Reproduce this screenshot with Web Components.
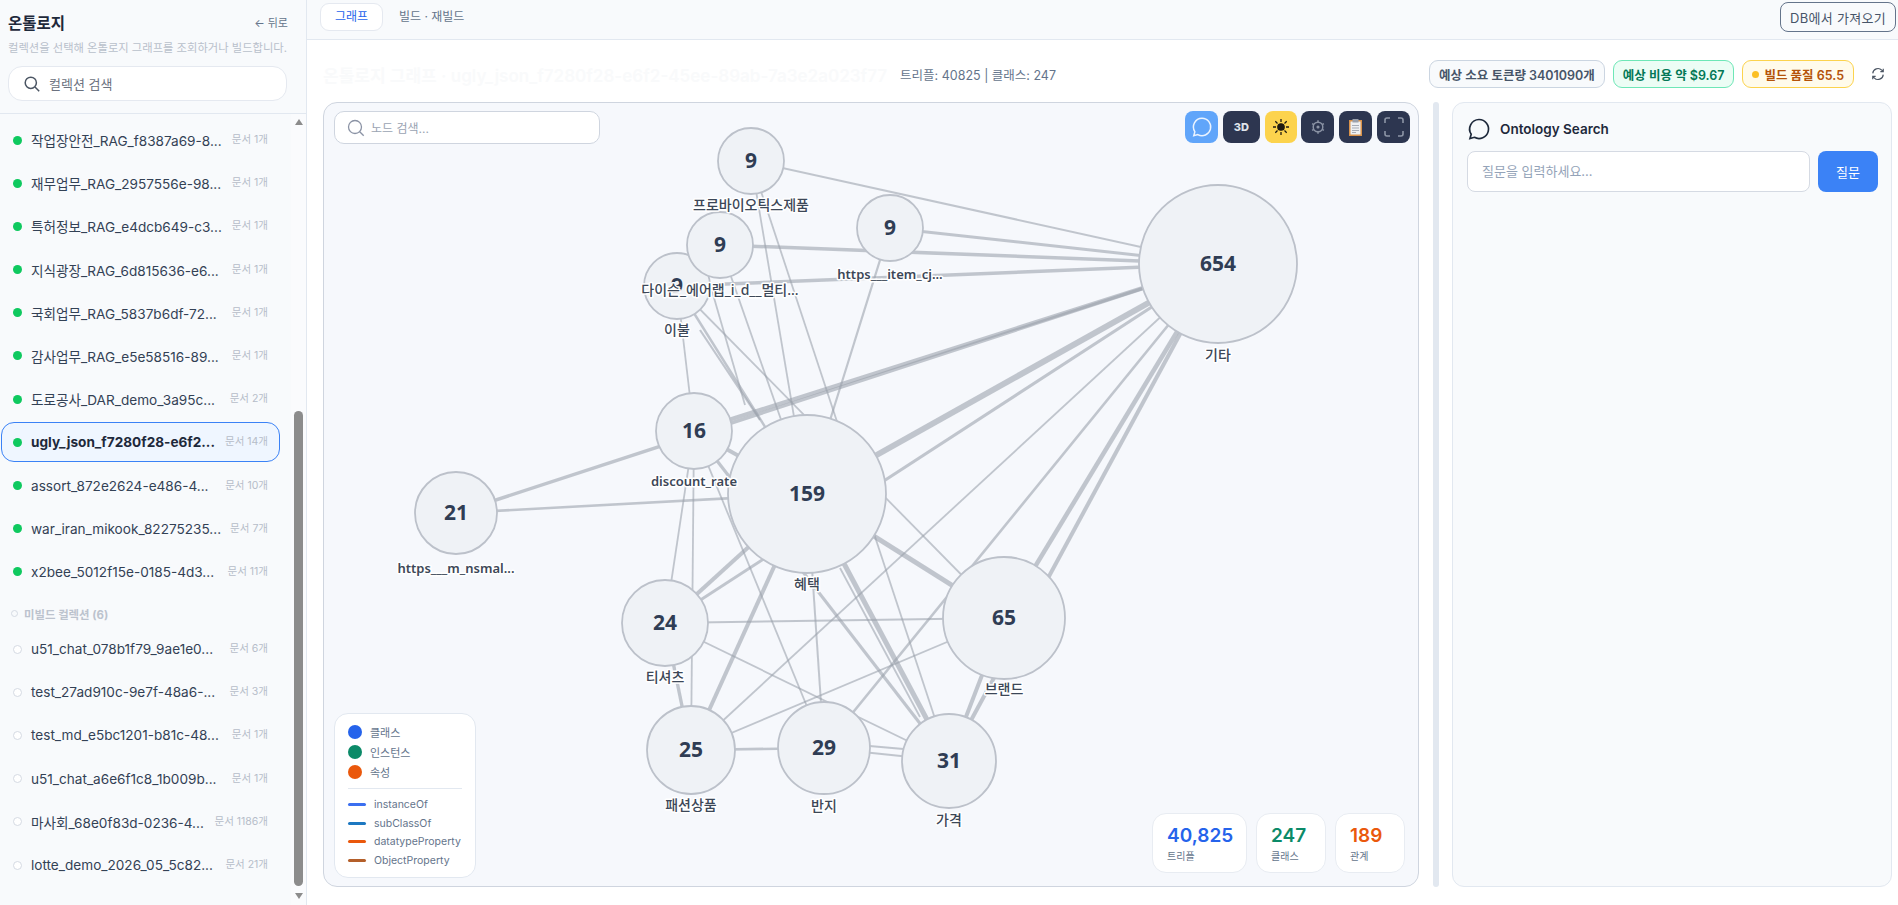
<!DOCTYPE html>
<html lang="ko">
<head>
<meta charset="utf-8">
<title>온톨로지</title>
<style>
    html, body { margin: 0; height: 905px; overflow: hidden; background: #fff; }
    body { font-family: Inter, "Noto Sans CJK KR", sans-serif; color: #334155; }
</style>
</head>
<body>
<onto-app></onto-app>
<script>
const FONT = 'Inter, "Noto Sans CJK KR", sans-serif';

class Base extends HTMLElement {
    constructor() {
        super();
        this.attachShadow({ mode: 'open' });
    }
    render(css, html) {
        this.shadowRoot.innerHTML = `<style>*{box-sizing:border-box}${css}</style>${html}`;
    }
}

class CollectionRow extends Base {
    connectedCallback() {
        const built = this.getAttribute('state') !== 'none';
        const sel = this.hasAttribute('selected');
        this.render(`
            :host { display: flex; align-items: center; height: 40px; margin-bottom: 3.2px; padding: 0 11px; border: 1px solid transparent; border-radius: 13px; }
            :host([selected]) { background: #eff6ff; border-color: #3b82f6; }
            .dot { width: 9px; height: 9px; border-radius: 50%; flex: none; background: #0fc95f; margin-right: 9px; }
            .dot.none { background: #fff; border: 1px solid #d5dae3; }
            .name { flex: 1; min-width: 0; font-size: 13.6px; white-space: nowrap; color: #334155; }
            .name.sel { font-weight: 700; color: #1e293b; }
            .docs { font-size: 10.5px; color: #b6bdc9; white-space: nowrap; margin-top: -3px; }
        `, `<span class="dot ${built ? '' : 'none'}"></span>
            <span class="name ${sel ? 'sel' : ''}">${this.getAttribute('name')}</span>
            <span class="docs">문서 ${this.getAttribute('docs')}개</span>`);
    }
}
customElements.define('collection-row', CollectionRow);

class FakeScrollbar extends Base {
    connectedCallback() {
        this.render(`
            :host { display: flex; flex-direction: column; align-items: center; width: 15px; flex: none; padding-top: 5px; background: #fafbfd; }
            .up, .down { width: 0; height: 0; border-left: 4.5px solid transparent; border-right: 4.5px solid transparent; }
            .up { border-bottom: 6px solid #8c8c8c; }
            .down { border-top: 6px solid #8c8c8c; margin-top: 7px; }
            .thumb { width: 9px; height: 475px; margin-top: 286px; background: #8c8c8c; border-radius: 5px; }
        `, `<div class="up"></div><div class="thumb"></div><div class="down"></div>`);
    }
}
customElements.define('fake-scrollbar', FakeScrollbar);

class OntoSidebar extends Base {
    connectedCallback() {
        const built = [
            ['작업장안전_RAG_f8387a69-8...', 1], ['재무업무_RAG_2957556e-98...', 1], ['특허정보_RAG_e4dcb649-c3...', 1],
            ['지식광장_RAG_6d815636-e6...', 1], ['국회업무_RAG_5837b6df-72...', 1], ['감사업무_RAG_e5e58516-89...', 1],
            ['도로공사_DAR_demo_3a95c...', 2], ['ugly_json_f7280f28-e6f2...', 14], ['assort_872e2624-e486-4...', 10],
            ['war_iran_mikook_82275235...', 7], ['x2bee_5012f15e-0185-4d3...', 11]
        ];
        const pending = [
            ['u51_chat_078b1f79_9ae1e0...', 6], ['test_27ad910c-9e7f-48a6-...', 3], ['test_md_e5bc1201-b81c-48...', 1],
            ['u51_chat_a6e6f1c8_1b009b...', 1], ['마사회_68e0f83d-0236-4...', 1186], ['lotte_demo_2026_05_5c82...', 21]
        ];
        const row = ([n, d], st, i) =>
            `<collection-row name="${n}" docs="${d}" state="${st}" ${st === 'ok' && i === 7 ? 'selected' : ''}></collection-row>`;
        this.render(`
            :host { display: flex; flex-direction: column; width: 307px; flex: none; height: 905px; background: #f8fafc; border-right: 1px solid #e2e8f0; }
            header { padding: 11px 18px 12px 8px; border-bottom: 1px solid #e2e8f0; height: 114px; }
            .top { display: flex; justify-content: space-between; align-items: center; height: 22px; }
            h1 { margin: 0; font-size: 15.5px; font-weight: 700; color: #1e293b; }
            .back { font-size: 11px; color: #64748b; }
            p { margin: 6px 0 9px; font-size: 11.3px; line-height: 18px; color: #b9c0cb; white-space: nowrap; }
            .search { display: flex; align-items: center; gap: 9px; height: 35px; margin-right: 1px; padding-left: 15px; background: #fff; border: 1px solid #e5e9f0; border-radius: 14px; font-size: 13px; color: #6b7280; }
            .body { flex: 1; display: flex; min-height: 0; }
            .list { flex: 1; min-width: 0; padding: 6px 11px 0 1px; overflow: hidden; }
            .head { display: flex; align-items: center; gap: 6px; height: 34px; padding: 3px 0 0 10px; font-size: 11.4px; font-weight: 700; color: #bcc3ce; }
            .head i { width: 7px; height: 7px; border: 1px solid #d5dae3; border-radius: 50%; }
        `, `<header>
                <div class="top"><h1>온톨로지</h1><span class="back">← 뒤로</span></div>
                <p>컬렉션을 선택해 온톨로지 그래프를 조회하거나 빌드합니다.</p>
                <div class="search">
                    <svg width="16" height="16" viewBox="0 0 16 16" fill="none" stroke="#4b5563" stroke-width="1.5"><circle cx="6.8" cy="6.8" r="5.6"/><path d="M11 11l4.2 4.2"/></svg>
                    <span>컬렉션 검색</span>
                </div>
            </header>
            <div class="body">
                <div class="list">
                    ${built.map((b, i) => row(b, 'ok', i)).join('')}
                    <div class="head"><i></i><span>미빌드 컬렉션 (6)</span></div>
                    ${pending.map((b, i) => row(b, 'none', i)).join('')}
                </div>
                <fake-scrollbar></fake-scrollbar>
            </div>`);
    }
}
customElements.define('onto-sidebar', OntoSidebar);

class TabBar extends Base {
    connectedCallback() {
        this.render(`
            :host { display: flex; align-items: flex-start; height: 40px; flex: none; padding: 3px 2px 0 13px; background: #f8fafc; border-bottom: 1px solid #e2e8f0; font-size: 12px; }
            .tab { height: 28px; line-height: 26px; padding: 0 15px; border: 1px solid transparent; border-radius: 9px; color: #64748b; }
            .tab.on { width: 63px; text-align: center; padding: 0; background: #fff; border-color: #e5e9f0; color: #2563eb; }
            button { margin: -1px 0 0 auto; width: 116px; height: 30px; padding: 0; background: #f8fafc; border: 1px solid #64748b; border-radius: 8px; font: 13px ${FONT}; letter-spacing: .3px; color: #475569; }
        `, `<div class="tab on">그래프</div><div class="tab">빌드 · 재빌드</div><button>DB에서 가져오기</button>`);
    }
}
customElements.define('tab-bar', TabBar);

class StatusBadge extends Base {
    connectedCallback() {
        this.render(`
            :host { display: flex; align-items: center; gap: 5px; height: 28px; padding: 0 9px; border: 1px solid; border-radius: 9px; font-size: 12.5px; font-weight: 600; white-space: nowrap; }
            :host([tone="gray"]) { background: #f8fafc; border-color: #cbd5e1; color: #475569; }
            :host([tone="green"]) { background: #ecfdf5; border-color: #6ee7b7; color: #047857; }
            :host([tone="amber"]) { background: #fffbeb; border-color: #fcd34d; color: #b45309; }
            i { width: 7px; height: 7px; border-radius: 50%; background: #fbbf24; }
        `, `${this.getAttribute('tone') === 'amber' ? '<i></i>' : ''}<slot></slot>`);
    }
}
customElements.define('status-badge', StatusBadge);

class GraphHeader extends Base {
    connectedCallback() {
        this.render(`
            :host { display: flex; align-items: center; height: 62px; flex: none; padding: 6px 0 0; }
            h2 { margin: 0; font-size: 17px; font-weight: 600; color: #f9fafb; white-space: nowrap; }
            .meta { margin-left: 13px; font-size: 12.5px; color: #64748b; white-space: nowrap; }
            .right { margin-left: auto; display: flex; align-items: center; gap: 8px; }
            svg { margin: 0 7px 0 9px; }
        `, `<h2>온톨로지 그래프 · ugly_json_f7280f28-e6f2-45ee-89ab-7a3e2a023f77</h2>
            <span class="meta">트리플: 40825 | 클래스: 247</span>
            <div class="right">
                <status-badge tone="gray">예상 소요 토큰량 3401090개</status-badge>
                <status-badge tone="green">예상 비용 약 $9.67</status-badge>
                <status-badge tone="amber">빌드 품질 65.5</status-badge>
                <svg width="14" height="14" viewBox="0 0 24 24" fill="none" stroke="#4b5563" stroke-width="2"><path d="M3 11a9 9 0 0 1 15.5-5.5L21 8M21 3v5h-5M21 13a9 9 0 0 1-15.5 5.5L3 16M3 21v-5h5"/></svg>
            </div>`);
    }
}
customElements.define('graph-header', GraphHeader);

const NODES = {
    b: [677, 286, 33, '9', '이불', 331],
    p: [751, 161, 33, '9', '프로바이오틱스제품', 206],
    d: [720, 245, 33, '9', '다이슨_에어랩_i_d__멀티...', 291],
    h: [890, 228, 33, '9', 'https___item_cj...', 275],
    k: [1218, 264, 79, '654', '기타', 356],
    s: [694, 431, 38, '16', 'discount_rate', 482],
    m: [456, 513, 41, '21', 'https___m_nsmal...', 569],
    t: [807, 494, 79, '159', '혜택', 585],
    y: [665, 623, 43, '24', '티셔츠', 678],
    g: [1004, 618, 61, '65', '브랜드', 690],
    f: [691, 750, 44, '25', '패션상품', 806],
    r: [824, 748, 46, '29', '반지', 807],
    c: [949, 761, 47, '31', '가격', 821]
};
const EDGES = [
    ['k', 'p', 2], ['k', 'd', 3.5], ['k', 'h', 3], ['k', 'b', 3.5], ['k', 's', 4], ['k', 'm', 3.5], ['k', 't', 6],
    ['k', 'y', 3], ['k', 'f', 1.8], ['k', 'r', 2.6], ['k', 'c', 4], ['k', 'g', 4.5],
    ['t', 'g', 5], ['t', 'c', 5], ['t', 'y', 4], ['t', 'f', 4], ['t', 'r', 2], ['t', 'p', 1.8], ['t', 'd', 1.8],
    ['t', 'h', 2.2], ['t', 'b', 2.5], ['t', 's', 4], ['t', 'm', 2.6],
    ['c', 'p', 1.8], ['c', 's', 3.2], ['c', 'y', 1.8], ['c', 'g', 4], ['r', 'c', 1.8],
    ['b', 's', 1.8], ['b', 'g', 1.8], ['s', 'y', 1.8], ['s', 'f', 1.8], ['s', 'r', 1.8],
    ['y', 'f', 3.4], ['y', 'g', 2], ['f', 'g', 1.8], ['f', 'r', 2.6]
];
// doubled strokes that run next to another edge
const EXTRA = [
    [840, 568, 920, 717, 1.8], [708, 277, 745, 405, 1.8], [700, 330, 760, 420, 2.2], [824, 742, 949, 753, 1.8]
];

class GraphCanvas extends Base {
    connectedCallback() {
        const line = (x1, y1, x2, y2, w) =>
            `<line x1="${x1}" y1="${y1}" x2="${x2}" y2="${y2}" stroke="#9aa0ab" stroke-opacity=".58" stroke-width="${w}"/>`;
        const edges = EDGES.map(([a, b, w]) => line(NODES[a][0], NODES[a][1], NODES[b][0], NODES[b][1], w)).join('')
            + EXTRA.map(e => line(...e)).join('');
        const circles = Object.values(NODES).map(([x, y, r, n]) =>
            `<circle cx="${x}" cy="${y}" r="${r}" fill="#eff2f6" stroke="#bcc1ca" stroke-width="1.8"/>
             <text class="n" x="${x}" y="${y + 7}">${n}</text>`).join('');
        const labels = Object.values(NODES).map(([x, , , , l, ly]) =>
            `<text class="l ${/[가-힣]/.test(l) ? 'ko' : ''}" x="${x}" y="${ly + 4}">${l}</text>`).join('');
        this.render(`
            :host { display: block; position: absolute; inset: 0; }
            svg { display: block; width: 100%; height: 100%; }
            text { text-anchor: middle; font-family: "Noto Sans", "Noto Sans CJK KR", sans-serif; }
            .n { font-size: 21px; font-weight: 700; fill: #2f3d54; }
            .l { font-size: 13px; font-weight: 600; fill: #3c4757; paint-order: stroke; stroke: #fff; stroke-width: 3px; stroke-linejoin: round; }
            .l.ko { font-size: 14px; font-weight: 500; }
        `, `<svg viewBox="324 103 1094 783">${edges}${circles}${labels}</svg>`);
    }
}
customElements.define('graph-canvas', GraphCanvas);

class GraphToolbar extends Base {
    connectedCallback() {
        this.render(`
            :host { display: flex; gap: 4.8px; position: absolute; top: 8px; right: 8px; }
            div { display: flex; align-items: center; justify-content: center; width: 33px; height: 32px; border-radius: 8px; background: #2d3650; color: #dfe3ea; font-size: 11px; font-weight: 800; }
            .blue { background: #60a5fa; }
            .yellow { width: 32px; background: #fcd34d; }
            .wide { width: 37px; }
        `, `<div class="blue"><svg width="22" height="22" viewBox="0 0 24 24" fill="none" stroke="#eaf3ff" stroke-width="1.6"><path d="M12 2.5a9.5 9.5 0 1 1-4.6 17.8L3 21.5l1.2-4.3A9.5 9.5 0 0 1 12 2.5z"/></svg></div>
            <div class="wide">3D</div>
            <div class="yellow"><svg width="18" height="18" viewBox="0 0 18 18" fill="none" stroke="#1f1a10" stroke-width="1.3"><circle cx="9" cy="9" r="3.2" fill="#1f1a10"/><path d="M9 1v3M9 14v3M1 9h3M14 9h3M3.3 3.3l2.200 2.200M12.500 12.500l2.200 2.200M3.300 14.700l2.200-2.200M12.500 5.500l2.200-2.200"/></svg></div>
            <div><svg width="16" height="16" viewBox="0 0 16 16" fill="none" stroke="#8b93a5" stroke-width="1.5"><circle cx="8" cy="8" r="4.800"/><circle cx="8" cy="8" r=".8" fill="#8b93a5"/><path d="M8 1.200v2M8 12.800v2M2.100 4.600l1.700 1M12.200 10.400l1.700 1M2.100 11.400l1.700-1M12.200 5.600l1.700-1"/></svg></div>
            <div><svg width="13" height="17" viewBox="0 0 13 17"><rect x="0" y="1" width="13" height="16" fill="#d9924a"/><rect x="1.500" y="2.500" width="10" height="13" fill="#eef0f3"/><rect x="3.500" y="0" width="6" height="3.500" fill="#9aa1ad"/><path d="M3 6.500h7M3 9h7M3 11.500h7M3 13.500h4" stroke="#a7adb8"/></svg></div>
            <div><svg width="20" height="20" viewBox="0 0 20 20" fill="none" stroke="#8d95a6" stroke-width="1.600"><path d="M1 6V3a2 2 0 0 1 2-2h3M14 1h3a2 2 0 0 1 2 2v3M19 14v3a2 2 0 0 1-2 2h-3M6 19H3a2 2 0 0 1-2-2v-3"/></svg></div>`);
    }
}
customElements.define('graph-toolbar', GraphToolbar);

class NodeSearch extends Base {
    connectedCallback() {
        this.render(`
            :host { display: flex; align-items: center; gap: 6px; position: absolute; top: 8px; left: 10px; width: 266px; height: 33px; padding-left: 12px; background: #fff; border: 1px solid #cfd5df; border-radius: 10px; font-size: 12px; color: #9aa3b2; }
        `, `<svg width="18" height="18" viewBox="0 0 18 18" fill="none" stroke="#8b93a5" stroke-width="1.3"><circle cx="8" cy="8" r="6.500"/><path d="M12.700 12.700l4 4"/></svg><span>노드 검색...</span>`);
    }
}
customElements.define('node-search', NodeSearch);

class GraphLegend extends Base {
    connectedCallback() {
        const dots = [['#2563eb', '클래스'], ['#0b8a68', '인스턴스'], ['#ea580c', '속성']];
        const lines = [['#3b6ff0', 'instanceOf'], ['#1d78c1', 'subClassOf'], ['#ea580c', 'datatypeProperty'], ['#b45f2a', 'ObjectProperty']];
        this.render(`
            :host { display: block; position: absolute; left: 10px; bottom: 8px; width: 142px; height: 165px; padding: 8px 13px; background: #fff; border: 1px solid #e2e8f0; border-radius: 14px; font-size: 11px; color: #64748b; }
            .d { display: flex; align-items: center; gap: 8px; height: 20px; }
            .d i { width: 14px; height: 14px; border-radius: 50%; }
            hr { margin: 6px 0 6px; border: 0; border-top: 1px solid #e2e8f0; }
            .l { display: flex; align-items: center; gap: 8px; height: 18.700px; font-size: 10.5px; white-space: nowrap; }
            .l i { width: 18px; height: 3px; border-radius: 2px; flex: none; }
        `, dots.map(([c, t]) => `<div class="d"><i style="background:${c}"></i>${t}</div>`).join('') + '<hr>'
            + lines.map(([c, t]) => `<div class="l"><i style="background:${c}"></i>${t}</div>`).join(''));
    }
}
customElements.define('graph-legend', GraphLegend);

class StatCard extends Base {
    connectedCallback() {
        this.render(`
            :host { display: block; height: 60px; padding: 9px 14px 0; background: #fff; border: 1px solid #e8ecf2; border-radius: 14px; }
            b { display: block; font-size: 19px; line-height: 26px; font-weight: 600; color: var(--c); }
            span { display: block; font-size: 10px; line-height: 14px; color: #64748b; }
        `, `<b style="--c:${this.getAttribute('color')}">${this.getAttribute('value')}</b><span>${this.getAttribute('label')}</span>`);
    }
}
customElements.define('stat-card', StatCard);

class GraphPanel extends Base {
    connectedCallback() {
        this.render(`
            :host { display: block; position: relative; flex: 1; min-width: 0; background: #f6f8fc; border: 1px solid #cfd5df; border-radius: 14px; overflow: hidden; }
            .stats { position: absolute; right: 13px; bottom: 13px; display: flex; gap: 9px; }
            stat-card:nth-child(1) { width: 95px; }
            stat-card:nth-child(2) { width: 70px; }
            stat-card:nth-child(3) { width: 70px; }
        `, `<graph-canvas></graph-canvas>
            <node-search></node-search>
            <graph-toolbar></graph-toolbar>
            <graph-legend></graph-legend>
            <div class="stats">
                <stat-card value="40,825" label="트리플" color="#2563eb"></stat-card>
                <stat-card value="247" label="클래스" color="#0b8a68"></stat-card>
                <stat-card value="189" label="관계" color="#ea580c"></stat-card>
            </div>`);
    }
}
customElements.define('graph-panel', GraphPanel);

class SearchPanel extends Base {
    connectedCallback() {
        this.render(`
            :host { display: block; width: 440px; flex: none; padding: 15px 13px 15px 14px; background: #f8fafc; border: 1px solid #e2e8f0; border-radius: 12px; }
            .title { display: flex; align-items: center; gap: 9px; height: 22px; font-size: 13.5px; font-weight: 600; color: #1e293b; }
            .ask { display: flex; gap: 8px; margin-top: 11px; }
            .input { flex: 1; height: 41px; line-height: 39px; padding-left: 14px; background: #fff; border: 1px solid #d5dae3; border-radius: 8px; font-size: 13px; color: #94a3b8; }
            button { width: 60px; height: 41px; background: #3b82f6; border: 0; border-radius: 8px; color: #fff; font: 13px ${FONT}; }
        `, `<div class="title">
                <svg width="24" height="24" viewBox="0 0 24 24" fill="none" stroke="#1e293b" stroke-width="1.7"><path d="M12 2.500a9.500 9.500 0 1 1-4.600 17.800L3 21.500l1.200-4.300A9.500 9.500 0 0 1 12 2.500z"/></svg>
                <span>Ontology Search</span>
            </div>
            <div class="ask"><div class="input">질문을 입력하세요...</div><button>질문</button></div>`);
    }
}
customElements.define('search-panel', SearchPanel);

class OntoApp extends Base {
    connectedCallback() {
        this.render(`
            :host { display: flex; width: 1898px; height: 905px; font-family: ${FONT}; }
            main { flex: 1; min-width: 0; display: flex; flex-direction: column; }
            .content { flex: 1; min-height: 0; display: flex; flex-direction: column; padding: 0 6px 18px 16px; background: #fff; }
            .row { flex: 1; min-height: 0; display: flex; }
            .split { width: 6px; flex: none; margin: 0 13px 0 14px; background: #e2e8f0; border-radius: 3px; }
        `, `<onto-sidebar></onto-sidebar>
            <main>
                <tab-bar></tab-bar>
                <div class="content">
                    <graph-header></graph-header>
                    <div class="row">
                        <graph-panel></graph-panel>
                        <div class="split"></div>
                        <search-panel></search-panel>
                    </div>
                </div>
            </main>`);
    }
}
customElements.define('onto-app', OntoApp);
</script>
</body>
</html>
